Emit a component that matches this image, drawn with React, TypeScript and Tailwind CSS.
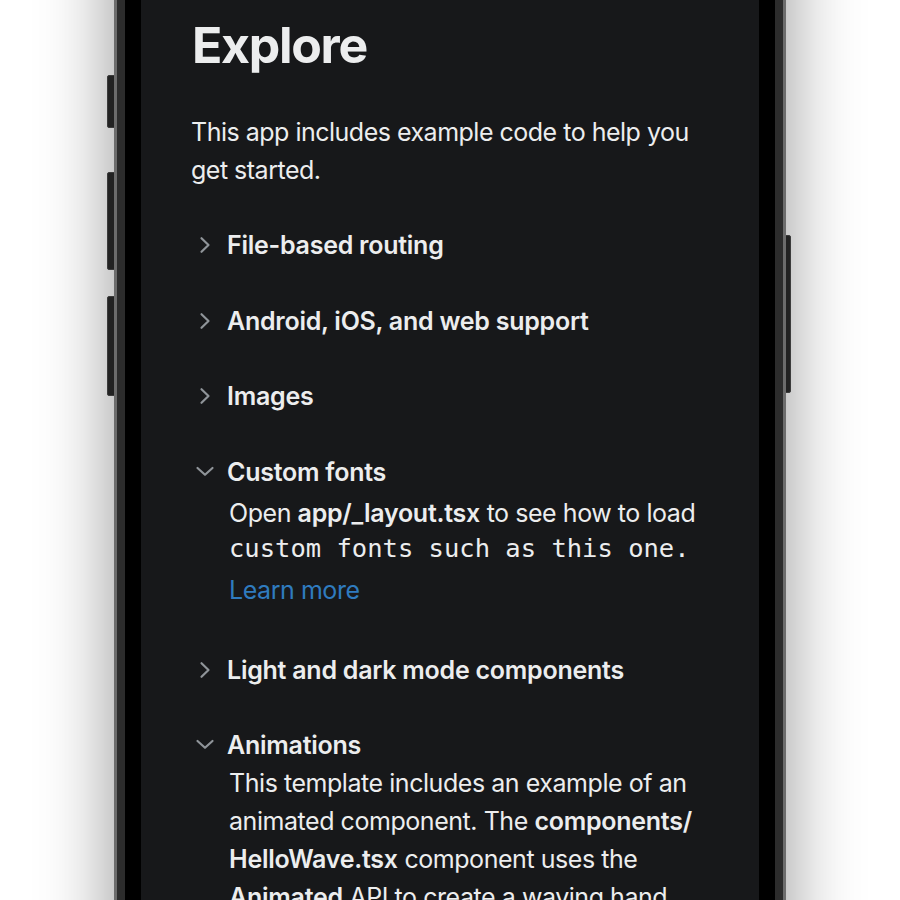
import React from "react";

function Chevron({ open }: { open?: boolean }) {
  return (
    <svg width="28" height="28" viewBox="0 0 28 28" fill="none" className="shrink-0">
      {open ? (
        <path d="M6.5 10 L14 16.8 L21.5 10" stroke="#8f9499" strokeWidth="2.2" strokeLinecap="round" strokeLinejoin="round" />
      ) : (
        <path d="M10.5 7.2 L17.5 14 L10.5 20.8" stroke="#8f9499" strokeWidth="2.2" strokeLinecap="round" strokeLinejoin="round" />
      )}
    </svg>
  );
}

function Heading({ title, open, className }: { title: string; open?: boolean; className?: string }) {
  return (
    <div className={`flex items-center gap-[8px] h-[38px] ${className ?? ""}`}>
      <Chevron open={open} />
      <span className="text-[25px] leading-[38px] font-semibold text-[#ecedee] tracking-[-0.25px] whitespace-nowrap">
        {title}
      </span>
    </div>
  );
}

export default function App() {
  const sans = { fontFamily: "Inter, 'Noto Sans', sans-serif" };

  return (
    <div className="w-[900px] h-[900px] overflow-hidden bg-white flex justify-center">
      {/* phone */}
      <div className="relative -mt-[200px] w-[672px] h-[1300px] shrink-0">
        {/* side buttons */}
        <div className="absolute left-[-7px] top-[275px] w-[9px] h-[53px] rounded-[2px] bg-[#2b2b2b] border border-[#4a4a4a]" />
        <div className="absolute left-[-7px] top-[372px] w-[9px] h-[98px] rounded-[2px] bg-[#2b2b2b] border border-[#4a4a4a]" />
        <div className="absolute left-[-7px] top-[496px] w-[9px] h-[100px] rounded-[2px] bg-[#2b2b2b] border border-[#4a4a4a]" />
        <div className="absolute right-[-5px] top-[435px] w-[8px] h-[158px] rounded-[2px] bg-[#2b2b2b] border border-[#4a4a4a]" />

        <div className="relative h-full rounded-[90px] border-[3px] border-[#6c6c6c] bg-[#2c2c2c] p-[8px] shadow-[0_0_75px_rgba(0,0,0,0.42)]">
          <div className="h-full rounded-[82px] bg-black p-[16px]">
            <div
              className="h-full rounded-[66px] bg-[#17181a] px-[50px] pt-[193px] overflow-hidden"
              style={sans}
            >
              <h1 className="text-[50px] leading-[50px] font-bold text-[#ecedee] tracking-[-1.3px] ml-[1px]">
                Explore
              </h1>

              <p className="mt-[43px] text-[25px] leading-[38px] text-[#ecedee] tracking-[-0.5px]">
                This app includes example code to help you get started.
              </p>

              <Heading title="File-based routing" className="mt-[37px]" />
              <Heading title="Android, iOS, and web support" className="mt-[38px]" />
              <Heading title="Images" className="mt-[37px]" />
              <Heading title="Custom fonts" open className="mt-[38px]" />

              <div className="ml-[38px] mt-[3px] text-[25px] text-[#ecedee] tracking-[-0.45px]">
                <p className="leading-[38px] whitespace-nowrap">
                  Open <span className="font-semibold tracking-[-0.25px]">app/_layout.tsx</span> to see how to load
                </p>
                <p
                  className="leading-[32px] whitespace-nowrap tracking-normal text-[25.5px]"
                  style={{ fontFamily: "'DejaVu Sans Mono', 'Liberation Mono', monospace" }}
                >
                  custom fonts such as this one.
                </p>
                <p className="mt-[7px] leading-[38px] text-[#2f7bbf]">Learn more</p>
              </div>

              <Heading title="Light and dark mode components" className="mt-[42px]" />
              <Heading title="Animations" open className="mt-[37px]" />

              <p className="ml-[38px] text-[25px] leading-[38px] text-[#ecedee] tracking-[-0.45px] whitespace-nowrap">
                This template includes an example of an
                <br />
                animated component. The <span className="font-semibold tracking-[-0.25px]">components/</span>
                <br />
                <span className="font-semibold tracking-[-0.25px]">HelloWave.tsx</span> component uses the
                <br />
                <span className="font-semibold tracking-[-0.25px]">Animated</span> API to create a waving hand
                <br />
                animation.
              </p>
            </div>
          </div>
        </div>
      </div>
    </div>
  );
}
